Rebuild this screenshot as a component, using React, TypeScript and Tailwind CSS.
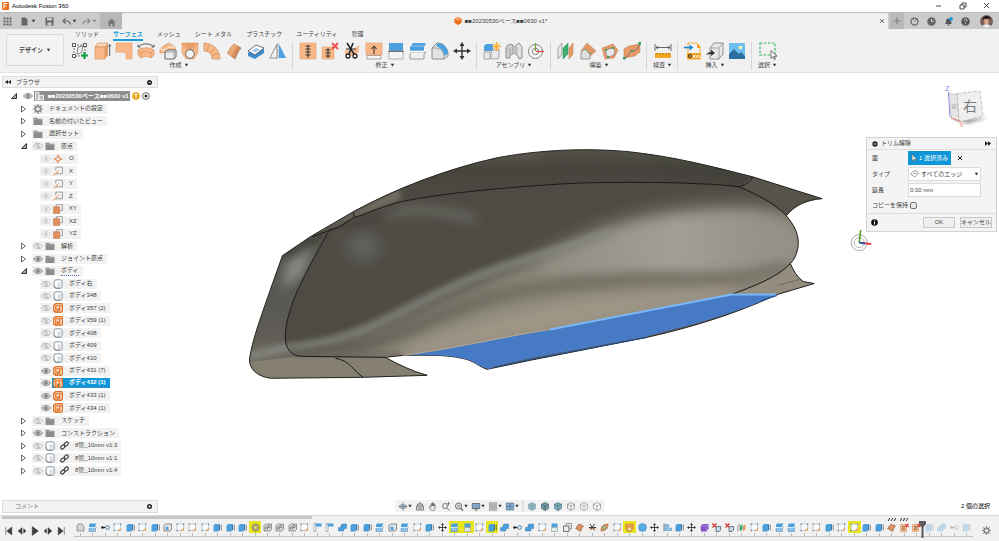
import { useState, type ReactNode } from 'react';
import clsx from 'clsx';

const BLUE = '#4a9fdc';
const ORANGE = '#f8b888';

const Svg = ({ children, size = 18, className }: { children: ReactNode, size?: number, className?: string }) => (
    <svg width={size} height={size} viewBox="0 0 18 18" fill="none" className={clsx('block shrink-0', className)} aria-hidden="true">{children}</svg>
)

const Caret = ({ className }: { className?: string }) => (
    <svg width="5" height="4" viewBox="0 0 5 4" className={clsx('block shrink-0', className)} aria-hidden="true"><path d="M0.8 0.8h3.4L2.5 3.4z" fill="#333" /></svg>
)

/* ---------- ribbon icons ---------- */

const ribbonIcons: Record<string, ReactNode> = {
    sketch: <><path d="M3 3h11v11H3z" stroke="#666" strokeWidth=".9" strokeDasharray="2 1" /><path d="M6 12l1-7 5-1-1 4c0 3-2 4-5 4z" stroke="#666" strokeWidth=".8" /><path d="M1.500 1.500h3v3h-3zM12.500 1.500h3v3h-3zM1.500 12.500h3v3h-3z" fill="#fff" stroke="#444" strokeWidth=".9" /><path d="M13.500 10v7M10 13.500h7" stroke="#15a04a" strokeWidth="2.200" /></>,
    extrude: <><path d="M2 5l3-4h10l-3 4z" fill="#fbd3b2" stroke="#d08a58" strokeWidth=".6" /><path d="M2 5h10v12H2z" fill={ORANGE} stroke="#d08a58" strokeWidth=".6" /><path d="M12 5l3-4v12l-3 4z" fill="#e29a66" /><path d="M16.700 14V3M15.500 4.500l1.200-2 1.200 2" stroke="#333" strokeWidth=".8" /></>,
    patch: <path d="M1 1h16v16h-6v-4c0-2-1-3-3-3H1z" fill={ORANGE} stroke="#e6a06f" strokeWidth=".7" />,
    revolve: <><path d="M1 8c5-3 11-3 16 0v5l-3 3c-3-2-7-2-10 0l-3-3z" fill={ORANGE} stroke="#d08a58" strokeWidth=".6" /><path d="M4 11v5M14 11v5M4 11c3-2 7-2 10 0l3-3M4 11L1 8" stroke="#d08a58" strokeWidth=".6" /><path d="M1.500 4.500C6 1 12 1 16.500 4.500M1 2.500v2.500h2.500M17 2.500v2.500h-2.500" stroke="#333" strokeWidth=".8" /></>,
    sweep: <><path d="M1 7l5-4 4-2 6 4v6l-7 2-2-3-6 1z" fill={ORANGE} stroke="#d08a58" strokeWidth=".6" /><path d="M1 7l5 1 4-3 6 0" stroke="#fff" strokeWidth=".8" /><path d="M6 10l2-2h9v7l-2 2H6z" fill="#eee" stroke="#555" strokeWidth=".9" /><path d="M6 10h9v7M15 10l2-2" stroke="#777" strokeWidth=".7" /></>,
    loft: <><path d="M1 1h16v10l-4 6H5l-4-6z" fill={ORANGE} stroke="#e6a06f" strokeWidth=".6" /><path d="M3 1h12l-4 6H7z" fill="#e89c64" /><path d="M1 1l6 8M17 1l-6 8" stroke="#c07a4c" strokeWidth=".6" /><circle cx="9" cy="12" r="4.300" fill="#f5f5f5" stroke="#555" strokeWidth=".9" /></>,
    ruled: <path d="M1 1c9 0 16 7 16 16h-8c0-5-3-8-8-8zM6 2L4 9.500M12 5l-4.500 6M16 11l-7 2.500" fill={ORANGE} stroke="#cf8b5b" strokeWidth=".7" />,
    offset: <><path d="M2 11c2-1 3-6 7-9l7 4c-3 3-4 7-6 11z" fill="#d98d5b" stroke="#9a6138" strokeWidth=".6" /><path d="M2 11c2-1 3-6 7-9l4 2.300c-4 3-4 7-6.500 10.500z" fill="#e9a778" /></>,
    thicken: <><path d="M1 11l8-7 8 3v4l-9 6-7-3z" fill="#3c8dcf" /><path d="M1 9l8-6 8 3-9 7z" fill="#fff" stroke="#3a3a3a" strokeWidth=".7" /><path d="M5 9l4-3 4 1.500-4.500 3z" fill="#9cc6ea" /></>,
    mirror: <><path d="M8 2v14H1z" fill="#f4f4f4" stroke="#777" strokeWidth=".8" /><path d="M10 2v14h7z" fill="#4aa2e2" /><path d="M9 1v16" stroke="#888" strokeWidth=".7" strokeDasharray="2 1" /></>,
    stitch: <><path d="M1 1h16v16H1z" fill={ORANGE} stroke="#e6a06f" strokeWidth=".6" /><path d="M9 3v13M6.500 4h5M6.500 7h5M6.500 10h5M6.500 13h5" stroke="#333" strokeWidth="1" /></>,
    unstitch: <><path d="M1 5h12v12H1z" fill={ORANGE} stroke="#e6a06f" strokeWidth=".6" /><path d="M7 6v10M4.500 8h5M4.500 11h5M4.500 14h5" stroke="#333" strokeWidth="1" /><path d="M11 1l6 6M17 1l-6 6" stroke="#ef4b4b" strokeWidth="1.800" /></>,
    trim: <><path d="M2 8l7 1 7-6v7l-7 4-7-2z" fill={ORANGE} /><path d="M4 1l7 11M10 1L6 12" stroke="#222" strokeWidth="1.500" /><circle cx="5" cy="14" r="2" stroke="#222" strokeWidth="1.300" /><circle cx="12" cy="14" r="2" stroke="#222" strokeWidth="1.300" /><path d="M3 7h10" stroke="#222" strokeWidth="1" /></>,
    untrim: <><path d="M1 1h16v12H1z" fill={ORANGE} stroke="#e6a06f" strokeWidth=".6" /><path d="M2 13.500h14v3.500H2z" fill="#f5f5f5" stroke="#888" strokeWidth=".7" /><path d="M9 12V5M6.500 7L9 4l2.500 3" stroke="#222" strokeWidth="1" /></>,
    extend: <><path d="M2 1h14v8H2z" fill={BLUE} /><path d="M2 9h14v8H2z" fill="#f3f3f3" stroke="#888" strokeWidth=".6" /><path d="M1 9.500h16" stroke="#555" strokeWidth=".8" /></>,
    replace: <><path d="M1 5l3-4h13l-2 4v4H1z" fill={BLUE} /><path d="M1 12l2-2h14l-2 2v5H1z" fill="#f1f1f1" stroke="#777" strokeWidth=".7" /><path d="M1 9.500h14l2-2" stroke="#fff" strokeWidth="1.400" /><path d="M2 4h13" stroke="#a8d3f2" strokeWidth=".8" /></>,
    fillet: <><path d="M1 17V6l5-5c6 0 10 4 11 10v3l-4 3z" fill="#e3e3e3" stroke="#777" strokeWidth=".8" /><path d="M7 1c6 0 10 5 10 11l-4 2c0-5-3-8-8-10z" fill={BLUE} /><path d="M1 6h4c5 1 8 4 8 8v3" stroke="#888" strokeWidth=".7" /></>,
    move: <><path d="M9 2v14M2 9h14" stroke="#333" strokeWidth="1.400" /><path d="M9 0L6.500 4h5zM9 18l-2.500-4h5zM0 9l4-2.500v5zM18 9l-4-2.500v5z" fill="#333" /></>,
    component: <><path d="M1 4l2-2h7v7H1z" fill={BLUE} /><path d="M1 10h6v7H1zM8 10l2-2h6v7l-1 2H8z" fill="#e9e9e9" stroke="#888" strokeWidth=".7" /><path d="M13.500 0v9M9 4.500h9M10.300 1.300l6.400 6.400M16.700 1.300l-6.400 6.400" stroke="#f5a31a" strokeWidth="1" /><circle cx="13.500" cy="4.500" r="2.200" fill="#f8b330" /></>,
    joint: <><path d="M1 16V7c0-4 4-6 7-4v9l-3 1v3z" fill="#cfcfcf" stroke="#777" strokeWidth=".8" /><path d="M17 16V5l-3-4-4 3v8l3 2 1 3z" fill="#e3e3e3" stroke="#777" strokeWidth=".8" /><path d="M12 5v7M5 6v6" stroke="#888" strokeWidth=".7" /></>,
    jointOrigin: <><circle cx="8.500" cy="9.500" r="7" fill="#f7f7f7" stroke="#777" strokeWidth=".9" /><circle cx="8.500" cy="9.500" r="3.200" stroke="#777" strokeWidth=".9" /><path d="M8.500 9V1" stroke="#6aa52c" strokeWidth="1.200" /><path d="M9 9.500h8" stroke="#dd4444" strokeWidth="1.200" /></>,
    planeOffset: <><path d="M1 6l4-5v11l-4 5z" fill="#e6e6e6" stroke="#888" strokeWidth=".7" /><path d="M6 6l5-5v11l-5 5z" fill="#3fae72" stroke="#278a54" strokeWidth=".5" /><path d="M12 6l4-5v11l-4 5z" fill="#e79a68" stroke="#bf7747" strokeWidth=".5" /></>,
    planeAngle: <><path d="M8 1l9 8-7 6-8-6z" fill="#e79a68" stroke="#bf7747" strokeWidth=".5" /><path d="M2 10l4-3 5 5v5H2z" fill="#e0e0e0" stroke="#777" strokeWidth=".7" /><path d="M6 7l5 5 3-3" stroke="#2fa35e" strokeWidth="1" strokeDasharray="2 1" /></>,
    planeTangent: <><path d="M1 6l11-4 5 6-4 8-9 1z" fill="#e79a68" stroke="#bf7747" strokeWidth=".5" /><path d="M5 8l6-2 3 2-1 5-5 2-3-2z" fill="#e6e6e6" stroke="#777" strokeWidth=".7" /><path d="M4 7h2v2H4zM11 5h2v2h-2zM6 14h2v2H6z" fill="#2fa35e" /></>,
    planePath: <><path d="M1 7l5-3 11-2v8l-5 4-11 2z" fill="#e79a68" stroke="#bf7747" strokeWidth=".5" /><path d="M2 16c4-1 4-6 6-7s4 3 9-7" stroke="#666" strokeWidth=".8" /><path d="M0 15h2.500v2.500H0zM15.500 0H18v2.500h-2.500zM8 8h2v2H8z" fill="#2fa35e" /></>,
    measure: <><path d="M1 2v7M17 2v7M2 5.500h14M4 4L2 5.500 4 7M14 4l2 1.500L14 7" stroke="#555" strokeWidth=".9" /><path d="M1 11h16v5H1z" fill="#f0a826" /><path d="M3 11v2M6 11v2M9 11v2M12 11v2M15 11v2" stroke="#96640b" strokeWidth=".6" /></>,
    insertSvg: <><path d="M4 1h9l3 4v12H4z" fill="#f2f2f2" stroke="#f0a020" strokeWidth=".8" /><path d="M13 1l4 5h-4z" fill="#f0a020" /><path d="M3 11h14v6H3z" fill="#f0a020" /><circle cx="6" cy="14" r="1.600" stroke="#333" strokeWidth="1" /><text x="8.500" y="15.700" fontSize="4" fontWeight="700" fill="#fff">SVG</text><path d="M0 5.500h7" stroke="#1c87d8" strokeWidth="1.600" /><path d="M5.500 2.500L9.500 5.500l-4 3z" fill="#1c87d8" /></>,
    insertDerive: <><path d="M4 6l4-5h9v11l-4 5H4z" fill="#e9e9e9" stroke="#777" strokeWidth=".8" /><path d="M4 6h9v11M13 6l4-5" stroke="#888" strokeWidth=".7" /><path d="M0 13c1-2 3-3 5-3V7.500L9 11l-4 3v-2c-2 0-3 0-5 1z" fill="#333" /></>,
    canvas: <><path d="M1 1h16v16H1z" fill="#6fc0f0" /><path d="M1 12l5-5 5 5 2-2 4 4v3H1z" fill="#2a6f9f" /><circle cx="12.500" cy="5.500" r="1.800" fill="#fbf5b0" /></>,
    select: <><path d="M1 1h15v12H1z" stroke="#35b565" strokeWidth="1.200" strokeDasharray="2.500 1.500" /><path d="M12 8.500v8l2-2 1.300 3 1.200-.6-1.200-2.700H18z" fill="#fff" stroke="#333" strokeWidth=".7" /></>,
};

const ribbonGroups = [
    { label: '作成', icons: ['sketch', 'extrude', 'patch', 'revolve', 'sweep', 'loft', 'ruled', 'offset', 'thicken', 'mirror'] },
    { label: '修正', icons: ['stitch', 'unstitch', 'trim', 'untrim', 'extend', 'replace', 'fillet', 'move'] },
    { label: 'アセンブリ', icons: ['component', 'joint', 'jointOrigin'] },
    { label: '構築', icons: ['planeOffset', 'planeAngle', 'planeTangent', 'planePath'] },
    { label: '検査', icons: ['measure'] },
    { label: '挿入', icons: ['insertSvg', 'insertDerive', 'canvas'] },
    { label: '選択', icons: ['select'] },
];

const tabs = ['ソリッド', 'サーフェス', 'メッシュ', 'シート メタル', 'プラスチック', 'ユーティリティ', '管理'];

/* ---------- browser tree ---------- */

type Eye = 'on' | 'off' | 'dim';
type Row = { label: string, level: 1 | 2, icon: string, eye?: Eye, arrow?: 'open' | 'closed', link?: boolean, selected?: boolean, dotted?: boolean };

const rows: Row[] = [
    { label: 'ドキュメントの設定', level: 1, icon: 'gear', arrow: 'closed' },
    { label: '名前の付いたビュー', level: 1, icon: 'folder', arrow: 'closed' },
    { label: '選択セット', level: 1, icon: 'folder', arrow: 'closed' },
    { label: '原点', level: 1, icon: 'folder', eye: 'off', arrow: 'open' },
    { label: 'O', level: 2, icon: 'point', eye: 'dim' },
    { label: 'X', level: 2, icon: 'axis', eye: 'dim' },
    { label: 'Y', level: 2, icon: 'axis', eye: 'dim' },
    { label: 'Z', level: 2, icon: 'axis', eye: 'dim' },
    { label: 'XY', level: 2, icon: 'plane', eye: 'dim' },
    { label: 'XZ', level: 2, icon: 'plane', eye: 'dim' },
    { label: 'YZ', level: 2, icon: 'plane', eye: 'dim' },
    { label: '解析', level: 1, icon: 'folder', eye: 'off', arrow: 'closed' },
    { label: 'ジョイント原点', level: 1, icon: 'folder', eye: 'on', arrow: 'closed' },
    { label: 'ボディ', level: 1, icon: 'folder', eye: 'on', arrow: 'open', dotted: true },
    { label: 'ボディ右', level: 2, icon: 'body', eye: 'off' },
    { label: 'ボディ348', level: 2, icon: 'body', eye: 'off' },
    { label: 'ボディ357 (2)', level: 2, icon: 'surface', eye: 'off' },
    { label: 'ボディ359 (1)', level: 2, icon: 'surface', eye: 'off' },
    { label: 'ボディ408', level: 2, icon: 'body', eye: 'off' },
    { label: 'ボディ409', level: 2, icon: 'body', eye: 'off' },
    { label: 'ボディ410', level: 2, icon: 'body', eye: 'off' },
    { label: 'ボディ431 (7)', level: 2, icon: 'surface', eye: 'on' },
    { label: 'ボディ432 (1)', level: 2, icon: 'surface', eye: 'on', selected: true, dotted: true },
    { label: 'ボディ433 (1)', level: 2, icon: 'surface', eye: 'on' },
    { label: 'ボディ434 (1)', level: 2, icon: 'surface', eye: 'on' },
    { label: 'スケッチ', level: 1, icon: 'folder', eye: 'off', arrow: 'closed' },
    { label: 'コンストラクション', level: 1, icon: 'folder', eye: 'on', arrow: 'closed' },
    { label: '8管_10mm v1:3', level: 1, icon: 'body', eye: 'off', arrow: 'closed', link: true },
    { label: '8管_10mm v1:1', level: 1, icon: 'body', eye: 'off', arrow: 'closed', link: true },
    { label: '8管_10mm v1:4', level: 1, icon: 'body', eye: 'off', arrow: 'closed', link: true },
];

const treeIcons: Record<string, ReactNode> = {
    gear: <><circle cx="9" cy="9" r="4.700" stroke="#888" strokeWidth="3" /><path d="M9 0v4M9 14v4M0 9h4M14 9h4M2.600 2.600l3 3M12.400 12.400l3 3M2.600 15.400l3-3M12.400 5.600l3-3" stroke="#888" strokeWidth="2.200" /></>,
    folder: <><path d="M1 3h6l2 2h8v11H1z" fill="#8c8c8c" /><path d="M1 6.500h16" stroke="#b9b9b9" strokeWidth="1" /></>,
    point: <><path d="M9 1v16M1 9h16" stroke="#e08a50" strokeWidth="1.800" /><path d="M9 4l5 5-5 5-5-5z" fill="#f2f2f2" stroke="#e08a50" strokeWidth="2" /></>,
    axis: <><path d="M5 2h12v12H5M5 2v6" stroke="#888" strokeWidth="1.400" /><path d="M1 17l9-9" stroke="#e08a50" strokeWidth="1.800" /></>,
    plane: <><path d="M6 1h11v11H6z" fill="#eee" stroke="#8a8a8a" strokeWidth="1.300" /><path d="M1 5h11v12H1z" fill="#e08f5c" stroke="#bf7040" strokeWidth="1" /></>,
    body: <><rect x="2" y="1.500" width="14.500" height="15" rx="3.500" fill="#fff" stroke="#8090a0" strokeWidth="1.700" /><path d="M8 6h6v8H8z" fill="#dcdcdc" /><path d="M2 12l3 4.500h8" stroke="#777" strokeWidth="1.300" /></>,
    surface: <><path d="M1 4l4-3h11l1 3v11l-3 2h-3v-6H8v6H5l-4-3z" fill="#fbd9bd" stroke="#de7428" strokeWidth="2.200" /><path d="M5 5v11M3 5h13M12 6v9" stroke="#de7428" strokeWidth="2" /></>,
    link: <><rect x="1" y="9" width="9" height="6" rx="3" transform="rotate(-45 5.500 12)" stroke="#333" strokeWidth="2.200" /><rect x="8" y="3" width="9" height="6" rx="3" transform="rotate(-45 12.500 6)" stroke="#333" strokeWidth="2.200" /></>,
};

const eyeColors = { on: '#858585', off: '#adadad', dim: '#cfcfcf' };

const EyeIcon = ({ state }: { state: Eye }) => (
    <button className="block w-[12px] shrink-0" aria-label="表示">
        <svg width="10" height="8" viewBox="0 0 20 14" fill="none" className="mx-auto block">
            <path d="M1 7c4-7 14-7 18 0-4 7-14 7-18 0z" stroke={eyeColors[state]} strokeWidth="1.600" fill={state === 'on' ? '#c9c9c9' : 'none'} />
            <circle cx="10" cy="7" r="3" fill={state === 'off' ? 'none' : eyeColors[state]} stroke={eyeColors[state]} strokeWidth="1.200" />
            {state === 'off' && <path d="M5 1l10 12" stroke="#adadad" strokeWidth="1.600" />}
        </svg>
    </button>
)

const Arrow = ({ dir }: { dir: 'open' | 'closed' }) => (
    <button className="block w-[12px] shrink-0" aria-label="展開">
        <svg width="8" height="8" viewBox="0 0 16 16" fill="none">
            {dir === 'open' ? <path d="M13 3v10H3z" fill="#aaa" stroke="#333" strokeWidth="2" /> : <path d="M3 2l8 6-8 6z" stroke="#444" strokeWidth="1.600" />}
        </svg>
    </button>
)

const TreeRow = ({ row }: { row: Row }) => (
    <li className={clsx('flex min-h-[10px] flex-1 items-center', row.level === 1 ? 'pl-[18px]' : 'pl-[38px]')}>
        {row.arrow && <Arrow dir={row.arrow} />}
        <div className="flex h-[10px] items-center bg-[#f2f2f2]">
            {row.eye && <EyeIcon state={row.eye} />}
            <div className={clsx('flex h-[10px] items-center pr-1', row.selected && 'bg-[#0e96d8] font-bold text-white')}>
                <span className="flex w-[12px] justify-center"><Svg size={10}>{treeIcons[row.icon]}</Svg></span>
                {row.link && <span className="ml-[2px] flex w-[12px] justify-center"><Svg size={9}>{treeIcons.link}</Svg></span>}
                <span className={clsx('ml-[5px] leading-[9px] whitespace-nowrap', row.dotted && 'border-b border-dotted border-[#5f7fae]')}>{row.label}</span>
            </div>
        </div>
    </li>
)

/* ---------- timeline ---------- */

const featureIcons: Record<string, ReactNode> = {
    form: <path d="M2 16V6c0-3 3-5 7-4 4 0 7 2 7 6v8z" fill="#d4d4d4" stroke="#777" strokeWidth="1.300" />,
    split: <><path d="M2 4l2-3h13l-2 3v4H2z" fill={BLUE} /><path d="M2 11l2-2h13l-2 2v6H2z" fill="#8fc3ea" stroke="#4f7fa5" strokeWidth="1" /><path d="M1 9h16" stroke="#fff" strokeWidth="1.400" /></>,
    joint: <><path d="M1 9h8" stroke="#222" strokeWidth="2.400" /><circle cx="3" cy="9" r="2.400" fill="#222" /><circle cx="13" cy="9" r="4" fill="#cfe2f2" stroke="#56718a" strokeWidth="1.500" /></>,
    sketch: <><path d="M2 2h13v13H2z" fill="#fafafa" stroke="#8fb2cc" strokeWidth="1.200" /><path d="M1 1h2.500v2.500H1zM14 1h2.500v2.500H14zM1 14h2.500v2.500H1z" fill="#777" /><path d="M9 16l6-6 2 2-6 5z" fill="#f0a050" /></>,
    extrude: <><path d="M1 5l3-3h10l-3 3v12H1z" fill={BLUE} /><path d="M11 5l3-3v11l-3 4z" fill="#2f78b2" /><path d="M16.500 15V3" stroke="#444" strokeWidth="1.300" /></>,
    shell: <><path d="M2 5l3-3h12v11l-3 3H2z" fill="#e6e6e6" stroke="#555" strokeWidth="1.300" /><path d="M5 9c1-3 5-3 6 0v5H6z" fill="#4a9fdc" /></>,
    revolve: <><circle cx="9" cy="9" r="7" fill="#cbb98a" stroke="#6e6540" strokeWidth="1.400" /><circle cx="9" cy="9" r="3" fill="#f1ee7a" stroke="#6e6540" /></>,
    pattern: <><path d="M2 5l3-3h12v11l-3 3H2z" fill="#dcdcdc" stroke="#666" strokeWidth="1.300" /><circle cx="7" cy="10" r="2.500" stroke="#555" strokeWidth="1.300" /><circle cx="12" cy="7" r="2.500" stroke="#555" strokeWidth="1.300" /></>,
    flag: <><path d="M2 1h4v16H2z" fill="#fff" stroke="#777" strokeWidth="1" /><path d="M5 1h12v6H5z" fill={BLUE} /></>,
    combine: <path d="M1 9h5V4l3-2h8v9h-5v5H1z" fill={BLUE} stroke="#367fb8" strokeWidth="1" />,
    move: <><path d="M9 2v14M2 9h14" stroke="#333" strokeWidth="1.800" /><path d="M9 0L6 4h6zM9 18l-3-4h6zM0 9l4-3v6zM18 9l-4-3v6z" fill="#333" /></>,
    half: <><path d="M3 1h12v8H3z" fill={BLUE} /><path d="M3 9h12v8H3z" fill="#dfe9ef" stroke="#888" strokeWidth="1" /></>,
    copy: <><path d="M6 1h11v11H6z" fill="#e3e3e3" stroke="#777" strokeWidth="1.400" /><path d="M1 6h11v11H1z" fill="#ececec" stroke="#666" strokeWidth="1.800" /></>,
    surface: <path d="M1 11c2-1 3-6 7-9l9 4c-3 3-4 7-6 11z" fill="#df9361" stroke="#8a5a38" strokeWidth="1.200" />,
    trim: <><path d="M1 8h16v4H1z" fill={ORANGE} /><path d="M4 2l9 13M13 2L5 14M2 9h14" stroke="#333" strokeWidth="1.900" /></>,
    leaf: <><path d="M2 16C1 7 7 2 16 2c1 9-5 14-14 14z" fill="#e89a5e" stroke="#a3683c" strokeWidth="1.200" /><circle cx="9" cy="9" r="3.500" fill="#8fd09a" stroke="#666" /></>,
    loft: <><path d="M1 2h16v9l-5 6H6l-5-6z" fill="#ef9c4c" stroke="#c67838" strokeWidth="1" /><circle cx="9" cy="12" r="4" fill="#eee79a" stroke="#b0874a" /></>,
    sphere: <circle cx="9" cy="9" r="8" fill="#58aae6" stroke="#3d86bd" strokeWidth="1" />,
    align: <><path d="M2 1v16" stroke="#555" strokeWidth="1.500" /><path d="M4 3h7v5H4zM4 10h13v5H4z" fill="#9ccaec" stroke="#3f82b8" strokeWidth="1" /></>,
    box: <><path d="M1 6l5-4h11v9l-4 6H2z" fill="#7b55c4" /><path d="M1 6h11l5-4M12 6l1 11" stroke="#bba4ea" strokeWidth="1.300" /></>,
    broken: <><path d="M1 1l8 8M9 1L1 9" stroke="#d33" strokeWidth="2.600" /><path d="M8 9l3-2h6v7l-3 3H8z" fill="#c8dcea" stroke="#445" strokeWidth="1.400" /></>,
    planes: <><path d="M1 6l4-4v11l-4 4z" fill="#ddd" stroke="#888" /><path d="M6 6l5-4v11l-5 4z" fill="#3fae72" /><path d="M12 6l5-4v11l-5 4z" fill="#e79a68" /></>,
    unstitch: <><path d="M1 3h12v14H1z" fill={ORANGE} stroke="#d08a58" /><path d="M4 7h6M4 10h6M4 13h6" stroke="#555" strokeWidth="1.300" /><path d="M11 2l6 6M17 2l-6 6" stroke="#e53c3c" strokeWidth="2.200" /></>,
};

// a leading "*" marks a feature with a warning
const features = `form split joint sketch extrude sketch extrude shell sketch sketch sketch extrude extrude extrude *revolve
pattern pattern pattern sketch flag flag combine extrude extrude split shell split sketch extrude move *split *half sketch
*extrude combine joint combine sketch half copy surface trim leaf sketch *loft sphere move align extrude move box broken broken
planes sketch extrude split split sketch sketch extrude sketch *sketch extrude extrude surface unstitch unstitch
extrude combine joint extrude`.split(/\s+/);
const MARKER = 68;

const players = [
    { label: '先頭へ', d: 'M3 2v14M14 2v14L5 9z' },
    { label: '前へ', d: 'M9 3v12L2 9zM12 5v8l4-4z' },
    { label: '再生', d: 'M4 1v16L15 9z' },
    { label: '次へ', d: 'M9 3v12l7-6zM6 5v8L2 9z' },
    { label: '末尾へ', d: 'M15 2v14M4 2v14L13 9z' },
];

const Timeline = () => (
    <footer className="relative flex h-[26px] shrink-0 border-t border-[#dcdcdc] bg-[#f1f1f1]">
        <div className="absolute top-0 left-[2px] h-[3px] w-[31%] bg-[#c5c5c5]" />
        <div className="flex w-[74px] shrink-0 items-center gap-[3px] pt-[4px] pl-[4px]">
            {players.map((p) => (
                <button key={p.label} aria-label={p.label}><Svg size={10}><path d={p.d} fill="#3c3c3c" stroke="#3c3c3c" strokeWidth="1" /></Svg></button>
            ))}
        </div>
        <ol className="flex flex-1 pt-[5px]">
            {features.map((name, i) => (
                <li key={i} className="relative flex flex-1 flex-col items-center">
                    {(i === 65 || i === 66) && <svg width="8" height="3" viewBox="0 0 8 3" className="absolute -top-[3px]"><path d="M0 3l2-3M3 3l2-3M6 3l2-3" stroke="#222" strokeWidth="1" /></svg>}
                    <button aria-label={name.replace('*', '')} className={clsx('flex h-[12px] w-full items-center justify-center', name[0] === '*' && 'bg-[#e8e61c]', i >= MARKER && 'opacity-30')}>
                        <Svg size={9}>{featureIcons[name.replace('*', '')]}</Svg>
                    </button>
                    <span className="h-[3px] w-px bg-[#bdbdbd]" />
                    <span className="h-px w-full bg-[#c2c2c2]" />
                    {i === MARKER && <svg width="7" height="17" viewBox="0 0 7 17" className="absolute top-0 -left-[4px]"><path d="M0 0h7v3L4.500 6v11h-2V6L0 3z" fill="#5b5b5b" /></svg>}
                </li>
            ))}
        </ol>
        <button aria-label="設定" className="flex w-[26px] items-center justify-center pt-[3px]"><Svg size={9}>{treeIcons.gear}</Svg></button>
    </footer>
)

/* ---------- 3D view ---------- */

const HULL = 'M282 255L310 236L353 211C393 189 446 168 497 157C550 147 600 148 630 151C675 156 710 165 753 176L823 198C807 199 795 205 787 215C794 224 799 232 799 242C799 250 796 258 791 263C794 270 798 277 804 281L815 283L778 294C745 309 705 324 647 337L530 360L487 369C478 366 474 360 462 358C445 354 425 355 403 355L385 357C398 364 412 371 427 375L363 377L270 378C256 376 248 368 249 358C252 338 262 312 272 283Z';
const BELLY = 'M330 228C310 263 300 282 293 300C287 316 284 330 285 341C287 352 293 356 303 356L385 357L403 355C450 349 500 337 550 329L732 294C750 288 777 278 791 263C796 258 799 250 799 242C799 232 794 222 787 215C776 203 758 194 740 186C700 181 600 180 550 184C490 188 430 194 397 202C375 208 365 214 353 217Z';

const Model = () => (
    <svg viewBox="0 72 999 443" className="absolute inset-0 h-full w-full" fill="none" aria-label="モデル">
        <defs>
            <linearGradient id="hull" x1="0" y1="150" x2="0" y2="378" gradientUnits="userSpaceOnUse">
                <stop offset="0" stopColor="#5c5a51" />
                <stop offset=".08" stopColor="#46443d" />
                <stop offset=".3" stopColor="#504e46" />
                <stop offset=".6" stopColor="#575650" />
                <stop offset=".82" stopColor="#5f5d56" />
                <stop offset="1" stopColor="#777165" />
            </linearGradient>
            <linearGradient id="right" x1="480" y1="0" x2="760" y2="0" gradientUnits="userSpaceOnUse">
                <stop offset="0" stopColor="#9b988e" stopOpacity="0" />
                <stop offset=".7" stopColor="#a19f97" />
                <stop offset="1" stopColor="#94928a" />
            </linearGradient>
            <linearGradient id="belt" x1="330" y1="0" x2="790" y2="0" gradientUnits="userSpaceOnUse">
                <stop offset="0" stopColor="#5f5b51" />
                <stop offset=".45" stopColor="#6f6a5e" />
                <stop offset="1" stopColor="#787266" />
            </linearGradient>
            <filter id="b3" filterUnits="userSpaceOnUse" x="200" y="100" width="680" height="320"><feGaussianBlur stdDeviation="3" /></filter>
            <filter id="b6" filterUnits="userSpaceOnUse" x="200" y="100" width="680" height="320"><feGaussianBlur stdDeviation="6" /></filter>
            <filter id="b9" filterUnits="userSpaceOnUse" x="200" y="100" width="680" height="320"><feGaussianBlur stdDeviation="9" /></filter>
            <clipPath id="hullClip"><path d={HULL} /></clipPath>
            <clipPath id="bellyClip"><path d={BELLY} /></clipPath>
        </defs>
        <path d={HULL} fill="url(#hull)" />
        <g clipPath="url(#hullClip)">
            {/* front face */}
            <path d="M286 262L314 246L302 274L282 290Z" fill="#8a8e87" filter="url(#b6)" />
            <path d="M248 356L300 344" stroke="#858780" strokeWidth="8" filter="url(#b3)" />
            <path d="M282 256L326 232" stroke="#36342f" strokeWidth="3" filter="url(#b3)" />
            <path d="M245 362L290 357H440V382H245Z" fill="#857f72" />
            <path d="M310 238L353 212L400 188L400 198L353 217Z" fill="#7c776a" filter="url(#b3)" />
            <path d="M540 156C600 149 680 160 800 194" stroke="#3e3c36" strokeWidth="10" opacity=".5" filter="url(#b6)" />
        </g>
        <g clipPath="url(#bellyClip)">
            <path d={BELLY} fill="#4e4b44" />
            <path d="M270 378C370 342 425 305 505 272C565 246 600 218 680 208C740 201 780 205 810 215V380H270Z" fill="#8d887c" filter="url(#b9)" />
            <path d="M540 265C600 228 660 214 740 213C790 216 815 240 790 262C740 276 620 274 540 276Z" fill="url(#right)" filter="url(#b6)" />
            <path d="M330 356C400 338 440 312 490 297C550 281 640 277 700 279C740 281 770 272 790 266" stroke="url(#belt)" strokeWidth="12" filter="url(#b6)" />
            <path d="M280 348C330 344 360 332 390 317C430 297 470 275 520 261C550 252 580 242 610 232" stroke="#858880" strokeWidth="8" opacity=".85" filter="url(#b3)" />
            <path d="M400 352C450 330 500 313 570 300C640 291 690 290 740 288L732 296L550 331L410 357Z" fill="#9e9585" filter="url(#b6)" />
            <path d="M290 353C320 356 350 355 400 354" stroke="#6d685d" strokeWidth="6" filter="url(#b3)" />
            {/* soft reflections near the upper seam */}
            <path d="M382 214C405 206 430 208 475 218" stroke="#72746d" strokeWidth="6" filter="url(#b6)" />
            <ellipse cx="363" cy="246" rx="16" ry="12" fill="#686b65" filter="url(#b9)" />
            <path d="M346 224C362 225 376 220 396 206" stroke="#3b3832" strokeWidth="3" opacity=".7" filter="url(#b3)" />
        </g>
        <g clipPath="url(#hullClip)">
            <path d="M740 186L753 176L823 198L787 215C776 203 758 194 740 186Z" fill="#56534b" />
            <path d="M732 294C760 284 780 276 791 263L815 283L778 296Z" fill="#938c7f" />
            <path d="M778 285L800 279" stroke="#716c61" strokeWidth="1" />
            <path d="M487 370L530 361L650 337" stroke="#77776a" strokeWidth="3" />
        </g>
        <path d={HULL} stroke="#25241f" strokeWidth="1" />
        <g stroke="#1b1a18" strokeWidth="1">
            <path d="M330 228C310 263 300 282 293 300C287 316 284 330 285 341C287 352 293 356 303 356L385 357" />
            <path d="M312 236L340 226L353 217C365 214 375 208 397 202C430 194 490 188 550 184C600 180 700 181 740 186C758 194 776 203 787 215" />
            <path d="M740 186Q752 182 753 176M353 211L354 217" />
            <path d="M791 263C777 278 750 287 732 294" />
            <path d="M335 358C350 360 353 371 363 377" />
        </g>
        <path d="M403 355C450 349 500 337 550 329L732 294L778 294C745 309 705 322 647 336L530 358L494 366Q490 370 486 368C478 366 474 360 462 358C445 354 425 355 403 355Z" fill="#477ac4" />
        <path d="M403 355C450 349 500 337 550 329" stroke="#b9ad94" strokeWidth="1" />
        <path d="M550 329L732 294L777 294" stroke="#7bb7f6" strokeWidth="2" />
        <path d="M762 300L778 295M494 367L530 359L647 337" stroke="#1e4f98" strokeWidth="1" />
        {/* joint origin */}
        <circle cx="860" cy="242" r="8" stroke="#a6a6a6" strokeWidth="1" />
        <circle cx="860" cy="242" r="5" stroke="#b5b5b5" strokeWidth="1" />
        <path d="M860 242L861.500 229.500" stroke="#58a02a" strokeWidth="1.600" />
        <path d="M861 242L872 243.500" stroke="#dd2a2a" strokeWidth="1.600" />
        <path d="M860 242l6 1" stroke="#2257a8" strokeWidth="1.600" />
    </svg>
)

const ViewCube = () => (
    <svg width="52" height="46" viewBox="944 82 52 46" fill="none" className="mr-[2px] self-end" aria-label="右">
        <defs><filter id="cs" x="-30%" y="-60%" width="160%" height="220%"><feGaussianBlur stdDeviation="1.500" /></filter></defs>
        <path d="M953 119l36-1-20 6z" fill="#aaa" filter="url(#cs)" />
        <path d="M949.500 92L951 117" stroke="#7f83f0" strokeWidth="1" />
        <path d="M950 94L958 94L960 122L952 118Z" fill="#e4e4e4" />
        <path d="M958 94L981 91L984 116L960 122Z" fill="#efefef" />
        <path d="M950 94L972 90L981 91L958 94Z" fill="#f7f7f7" />
        <path d="M958 94L981 91L984 116L960 122ZM950 94L958 94L960 122L952 118Z" stroke="#b7b7b7" strokeWidth=".8" strokeDasharray="4 1.500" />
        <path d="M952 118L962 121.500" stroke="#ee7777" strokeWidth="1" />
        <text x="964" y="111" fontSize="14" fill="#777">右</text>
        <text x="952.500" y="108" fontSize="5" fill="#999">前</text>
        <text x="946" y="90.500" fontSize="7" fill="#7f83f0">Z</text>
        <text x="960.500" y="127" fontSize="6" fill="#ee7777">X</text>
    </svg>
)

const TrimDialog = () => {
    const [type, setType] = useState('すべてのエッジ');
    const [length, setLength] = useState('0.00 mm');
    const [copy, setCopy] = useState(false);

    return (
        <section className="w-[131px] border border-[#d2d2d2] bg-[#f4f4f4]">
            <header className="flex h-[12px] items-center gap-[3px] border-b border-[#dedede] px-[5px]">
                <svg width="6" height="6" viewBox="0 0 6 6"><circle cx="3" cy="3" r="2.700" fill="#222" /><path d="M1.500 3h3" stroke="#fff" strokeWidth=".8" /></svg>
                <h2 className="flex-1">トリム解除</h2>
                <svg width="6" height="5" viewBox="0 0 6 5"><path d="M0 0l3 2.500L0 5zM3 0l3 2.500L3 5z" fill="#222" /></svg>
            </header>
            <div className="grid grid-cols-[36px_1fr] items-center gap-y-[2px] px-[5px] py-px">
                <span>面</span>
                <div className="flex items-center gap-[6px]">
                    <button className="flex h-[14px] items-center gap-[2px] bg-[#0e96d8] px-[3px] whitespace-nowrap text-white">
                        <svg width="6" height="8" viewBox="0 0 6 8"><path d="M1 0v7l1.500-1.500L3.500 8l1-.5-1-2H6z" fill="#dbe7ee" stroke="#444" strokeWidth=".5" /></svg>
                        1 選択済み
                    </button>
                    <button aria-label="クリア"><svg width="6" height="6" viewBox="0 0 6 6"><path d="M1 1l4 4M5 1L1 5" stroke="#222" strokeWidth="1" /></svg></button>
                </div>
                <label htmlFor="type">タイプ</label>
                <div className="relative mr-[10px]">
                    <select id="type" value={type} onChange={(e) => setType(e.target.value)} className="block h-[14px] w-full appearance-none border border-[#dcdcdc] bg-white pl-[12px]">
                        <option>すべてのエッジ</option>
                    </select>
                    <svg width="9" height="8" viewBox="0 0 9 8" fill="none" className="pointer-events-none absolute top-[3px] left-[2px]"><path d="M.5 4l3-3h3l2 2.500L5 7zM3 4l2-1 2 1" stroke="#888" strokeWidth=".8" /></svg>
                    <Caret className="pointer-events-none absolute top-[5px] right-[2px]" />
                </div>
                <label htmlFor="length">延長</label>
                <input id="length" value={length} onChange={(e) => setLength(e.target.value)} className="mr-[10px] block h-[14px] min-w-0 border border-[#dcdcdc] bg-white px-[1px]" />
                <label htmlFor="copy" className="py-[2px] whitespace-nowrap">コピーを保持</label>
                <input id="copy" type="checkbox" checked={copy} onChange={() => setCopy(!copy)} className="ml-[2px] size-[7px] appearance-none rounded-[2px] border border-[#777] bg-[#e8e8e8] checked:bg-[#0e96d8]" />
            </div>
            <footer className="flex h-[18px] items-center gap-[5px] border-t border-[#dedede] px-[4px]">
                <svg width="7" height="7" viewBox="0 0 7 7" className="mr-auto"><circle cx="3.500" cy="3.500" r="3.300" fill="#111" /><path d="M3.500 3v2.500M3.500 1.300v1" stroke="#fff" strokeWidth="1" /></svg>
                <button className="h-[11px] w-[32px] border border-[#c8c8c8] bg-[#efefef]">OK</button>
                <button className="h-[11px] w-[32px] border border-[#c8c8c8] bg-[#efefef] whitespace-nowrap">キャンセル</button>
            </footer>
        </section>
    )
}

const cube = (fill: string, line: string) => <><path d="M9 1l7 3.500v8.500L9 17l-7-4V4.500z" fill={fill} stroke={line} strokeWidth="1.200" /><path d="M2 4.500L9 8l7-3.500M9 8v9" stroke={line} strokeWidth="1.200" /></>;

const navTools: { name: string, caret?: boolean, icon: ReactNode }[] = [
    { name: 'オービット', caret: true, icon: <><path d="M9 1v16M1 9h16" stroke="#555" strokeWidth="1.400" /><ellipse cx="9" cy="9" rx="7.500" ry="3.500" stroke="#555" strokeWidth="1.300" /><circle cx="9" cy="9" r="2.500" fill="#5a9fd4" /></> },
    { name: 'ビュー正面', icon: <><path d="M2 8h14v8H2zM4 8V4h10v4M7 2h4" stroke="#666" strokeWidth="1.600" fill="#ddd" /><path d="M5 12h8" stroke="#555" strokeWidth="1.500" /></> },
    { name: '画面移動', icon: <path d="M5 10V4.500c0-1.500 2-1.500 2 0V8 2.500c0-1.500 2-1.500 2 0V8 3c0-1.500 2-1.500 2 0v5.500-3c0-1.500 2-1.500 2 0V12c0 3-2 5-5 5s-4-2-7-7c0-1.500 2-1.500 4 1" stroke="#555" strokeWidth="1.300" fill="#eee" /> },
    { name: 'ズーム', icon: <><circle cx="7" cy="8" r="5" stroke="#555" strokeWidth="1.500" /><path d="M11 12l5 5M14 1v6M11.500 3.500L14 1l2.500 2.500" stroke="#555" strokeWidth="1.500" /></> },
    { name: 'フィット', caret: true, icon: <><circle cx="8" cy="8" r="6" stroke="#555" strokeWidth="1.700" /><path d="M12.500 12.500L17 17" stroke="#555" strokeWidth="2.200" /><path d="M5 5h6v6H5z" fill="#b3b3b3" /></> },
    { name: '表示設定', caret: true, icon: <><path d="M1 3h16v10H1z" fill="#7fa9cc" stroke="#555" strokeWidth="1.500" /><path d="M6 16h7M9 13v3" stroke="#555" strokeWidth="1.500" /></> },
    { name: 'グリッド', caret: true, icon: <path d="M1 1h16v16H1zM1 6h16M1 11h16M6 1v16M11 1v16" fill="#b8b8b8" stroke="#a0a0a0" strokeWidth=".8" /> },
    { name: 'ビューポート', caret: true, icon: <path d="M1 2h7.500v6.500H1zM9.500 2H17v6.500H9.500zM1 9.500h7.500V16H1zM9.500 9.500H17V16H9.500z" fill="#8fb3d6" stroke="#4c6f92" strokeWidth="1.300" /> },
];

const cubes = [cube('#8fb6c4', '#7fa0ad'), cube('#6f9aa8', '#3f5a63'), cube('#7eb0bf', '#3f6470'), cube('none', '#777'), cube('#f5f5f5', '#888'), cube('#fff', '#777')];

const NavBar = () => (
    <div className="absolute bottom-[3px] left-1/2 flex h-[12px] -translate-x-1/2 items-center bg-[#f2f2f2] px-[1px]">
        {navTools.map((t) => (
            <button key={t.name} aria-label={t.name} className="flex h-full items-center px-[2px]">
                <Svg size={9}>{t.icon}</Svg>
                {t.caret && <Caret className="-mr-px" />}
            </button>
        ))}
        <span className="mx-[2px] h-full w-px bg-[#d0d0d0]" />
        {cubes.map((c, i) => (
            <button key={i} aria-label={`表示 ${i + 1}`} className="px-[2px]"><Svg size={9}>{c}</Svg></button>
        ))}
    </div>
)

const TopBar = () => (
    <>
        <div className="flex h-[12px] items-center bg-white px-[2px]">
            <svg width="7" height="8" viewBox="0 0 7 8"><rect width="7" height="8" rx="1" fill="#ee6c14" /><path d="M2 6.500V1.500h3.200M2 4h2.500" stroke="#fff" strokeWidth="1.100" fill="none" /></svg>
            <h1 className="ml-[3px] flex-1 text-black">Autodesk Fusion 360</h1>
            <div className="flex gap-[16px] pr-[6px]">
                {['M1 4h5', 'M1 3h4v4H1zM3 3V1h4v4H5', 'M1 1l5 5M6 1L1 6'].map((d, i) => (
                    <button key={d} aria-label={['最小化', '元に戻す', '閉じる'][i]}><svg width="8" height="8" viewBox="0 0 8 8" fill="none"><path d={d} stroke="#333" strokeWidth=".9" /></svg></button>
                ))}
            </div>
        </div>
        <div className="flex h-[17px] items-stretch border-t border-[#bdbdbd] bg-[#cbcbcb]">
            <div className="flex w-[100px] shrink-0 items-center pl-[3px]">
                <button aria-label="データ" className="w-[17px]"><Svg size={9}><path d="M1 1h4v4H1zM7 1h4v4H7zM13 1h4v4h-4zM1 7h4v4H1zM7 7h4v4H7zM13 7h4v4h-4zM1 13h4v4H1zM7 13h4v4H7zM13 13h4v4h-4z" fill="#666" /></Svg></button>
                <button aria-label="ファイル" className="flex w-[25px] items-center gap-[2px]"><Svg size={9}><path d="M3 1h8l4 4v12H3z" fill="#666" /></Svg><Caret /></button>
                <button aria-label="保存" className="w-[17px]"><Svg size={9}><path d="M1 1h16v16H1z" fill="#666" /><path d="M4 2h10v5H4zM5 11h8v6H5z" fill="#cbcbcb" /></Svg></button>
                <button aria-label="元に戻す" className="flex w-[20px] items-center gap-[1px]"><Svg size={9}><path d="M7 3L2 8l5 5M2 8h8c4 0 6 3 6 7" stroke="#666" strokeWidth="2.400" /></Svg><Caret /></button>
                <button aria-label="やり直し" className="flex items-center gap-[1px]"><Svg size={9}><path d="M11 3l5 5-5 5M16 8H8c-4 0-6 3-6 7" stroke="#8b8b8b" strokeWidth="2.200" /></Svg><Caret className="opacity-50" /></button>
            </div>
            <button aria-label="ホーム" className="flex w-[22px] shrink-0 items-center justify-center bg-[#b7b7b7] pt-[2px]"><Svg size={9}><path d="M9 1l8 8h-2v8h-4v-5H7v5H3V9H1z" fill="#777" /></Svg></button>
            <div className="flex flex-1 items-center rounded-t-[2px] bg-[#f1f1f1] pr-[3px]">
                <div className="flex flex-1 items-center justify-center gap-[3px]">
                    <Svg size={8}><path d="M9 0l8 4v9l-8 5-8-5V4z" fill="#ee6a1b" /><path d="M9 0l8 4-8 5-8-5z" fill="#ffa15c" /></Svg>
                    <span>■■20230530ベース■■0630 v1*</span>
                </div>
                <button aria-label="閉じる"><svg width="6" height="6" viewBox="0 0 6 6"><path d="M1 1l4 4M5 1L1 5" stroke="#555" strokeWidth=".8" /></svg></button>
            </div>
            <button aria-label="新規" className="ml-[2px] flex w-[14px] shrink-0 items-center justify-center bg-[#b9b9b9]"><Svg size={8}><path d="M9 1v16M1 9h16" stroke="#777" strokeWidth="2" /></Svg></button>
            <div className="flex shrink-0 items-center gap-[8px] px-[6px]">
                <button aria-label="拡張"><Svg size={9}><circle cx="9" cy="9" r="7" stroke="#666" strokeWidth="2.500" /><path d="M9 9l4-4M5 3l3 2" stroke="#666" strokeWidth="2" /></Svg></button>
                <button aria-label="ジョブ"><Svg size={9}><circle cx="9" cy="9" r="8.500" fill="#666" /><path d="M9 4v5h4" stroke="#d5d5d5" strokeWidth="2" /></Svg></button>
                <button aria-label="通知"><Svg size={9}><path d="M2 14c2-2 2-4 2-6 0-7 10-7 10 0 0 2 0 4 2 6zM7 15h4v2H7z" fill="#555" /><circle cx="14" cy="4" r="3.800" fill="#1b98e0" /></Svg></button>
                <button aria-label="ヘルプ"><Svg size={9}><circle cx="9" cy="9" r="8.500" fill="#555" /><path d="M6.500 7c0-4 5.500-3.500 5.500-.5 0 2-3 2-3 4.500M9 12.500v2" stroke="#e5e5e5" strokeWidth="1.800" /></Svg></button>
                <button aria-label="アカウント" className="ml-[2px]"><Svg size={13}><circle cx="9" cy="9" r="9" fill="#7b6258" /><path d="M3 7c0-7 12-8 12 0l-2-2H6z" fill="#1c1716" /><path d="M6 6h6v4c0 4-6 4-6 0z" fill="#d9a98c" /><path d="M3 15c2-3 10-3 12 0-3 4-9 4-12 0z" fill="#e9eaf0" /></Svg></button>
            </div>
        </div>
    </>
)

const Ribbon = () => {
    const [active, setActive] = useState('サーフェス');
    return (
        <div className="flex h-[44px] shrink-0 border-b border-[#e2e2e2] bg-[#f1f1f1]">
            <button className="mt-[5px] ml-[6px] flex h-[32px] w-[58px] shrink-0 items-center justify-center gap-[3px] rounded-[2px] border border-[#dadada] bg-[#f3f3f3] font-bold">デザイン<Caret /></button>
            <div className="min-w-0 flex-1">
                <nav className="flex h-[12px] gap-[14px] pl-[11px]">
                    {tabs.map((tab) => (
                        <button key={tab} onClick={() => setActive(tab)} className={clsx('h-[12px] border-b-2 whitespace-nowrap', active === tab ? 'border-[#1d9dd8] font-bold text-[#1d9dd8]' : 'border-transparent')}>{tab}</button>
                    ))}
                </nav>
                <div className="flex pt-[1px]">
                    {ribbonGroups.map((group) => (
                        <div key={group.label} className="flex flex-col items-center border-l border-[#d8d8d8] pr-[5px] pl-[6px] first:border-transparent">
                            <div className="flex gap-1">
                                {group.icons.map((name) => (
                                    <button key={name} aria-label={name}><Svg>{ribbonIcons[name]}</Svg></button>
                                ))}
                            </div>
                            <button className="flex h-[10px] items-center gap-[2px] whitespace-nowrap">{group.label}<Caret /></button>
                        </div>
                    ))}
                </div>
            </div>
        </div>
    )
}

const Browser = () => (
    <aside className="relative flex w-[158px] flex-col pt-[3px] pb-[2px] pl-[2px]">
        <header className="flex h-[12px] shrink-0 items-center gap-[5px] border border-[#dcdcdc] bg-[#f2f2f2] pr-[5px] pl-[2px]">
            <svg width="6" height="4" viewBox="0 0 6 4"><path d="M3 0L0 2l3 2zM6 0L3 2l3 2z" fill="#222" /></svg>
            <h2 className="flex-1">ブラウザ</h2>
            <svg width="5" height="5" viewBox="0 0 6 6"><circle cx="3" cy="3" r="3" fill="#222" /><path d="M1.500 3h3" stroke="#fff" strokeWidth=".8" /></svg>
        </header>
        <ul className="mt-[2px] mb-[23px] flex flex-1 flex-col">
            <li className="flex min-h-[10px] flex-1 items-center pl-[8px]">
                <Arrow dir="open" />
                <EyeIcon state="on" />
                <div className="flex h-[10px] items-center gap-[4px] bg-[#8d8d8d] px-[1px] font-bold whitespace-nowrap text-white">
                    <Svg size={9}><path d="M1 1h7v15H1zM8 7h9v9H8z" fill="#b9b9b9" stroke="#fff" strokeWidth="1.600" /></Svg>
                    <span>■■20230530ベース■■0630 v1</span>
                </div>
                <svg width="8" height="8" viewBox="0 0 8 8" className="mx-[2px] shrink-0"><circle cx="4" cy="4" r="3.800" fill="#eda51b" /><path d="M2.500 2.500h3M4 2.500V6" stroke="#fff" strokeWidth="1" /></svg>
                <svg width="8" height="8" viewBox="0 0 8 8" className="shrink-0"><circle cx="4" cy="4" r="3.400" fill="#fff" stroke="#444" strokeWidth=".8" /><circle cx="4" cy="4" r="1.500" fill="#222" /></svg>
            </li>
            {rows.map((row) => <TreeRow key={row.label} row={row} />)}
        </ul>
        <div className="flex h-[13px] shrink-0 items-center justify-between border border-[#dcdcdc] bg-[#f2f2f2] pr-[5px] pl-[12px] text-[#777]">
            コメント
            <button aria-label="追加"><svg width="5" height="5" viewBox="0 0 6 6"><circle cx="3" cy="3" r="3" fill="#222" /><path d="M1.500 3h3M3 1.500v3" stroke="#fff" strokeWidth=".8" /></svg></button>
        </div>
    </aside>
)

export default function App() {
    return (
        <div className="flex min-h-screen flex-col overflow-hidden bg-white font-['Liberation_Sans','Noto_Sans_CJK_JP',sans-serif] text-[6px] leading-[9px] text-[#3f3f3f]">
            <TopBar />
            <Ribbon />
            <main className="relative flex flex-1 justify-between">
                <Model />
                <Browser />
                <div className="relative flex flex-col gap-[9px] pt-[9px] pr-[2px]">
                    <ViewCube />
                    <TrimDialog />
                </div>
                <NavBar />
                <p className="absolute right-[9px] bottom-[4px] text-black">2 個の選択</p>
            </main>
            <Timeline />
        </div>
    )
}
